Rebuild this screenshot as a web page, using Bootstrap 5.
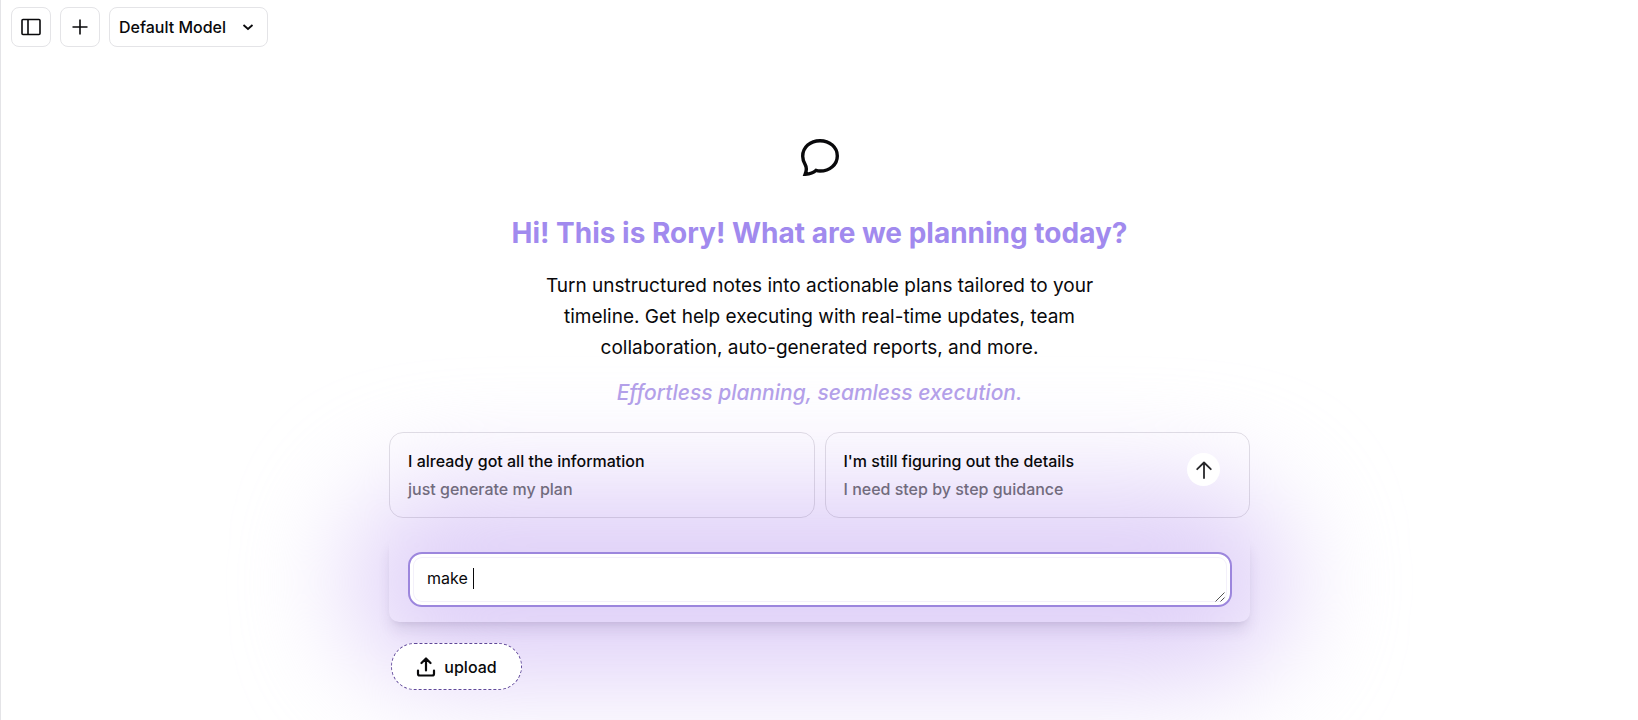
<!DOCTYPE html>
<html lang="en">
<head>
<meta charset="utf-8">
<meta name="viewport" content="width=device-width, initial-scale=1">
<title>Rory</title>
<link href="https://cdn.jsdelivr.net/npm/bootstrap@5.3.0/dist/css/bootstrap.min.css" rel="stylesheet">
<style>
  body { font-family: Inter, "Liberation Sans", sans-serif; color: #09090b; background: #fff; }
  .chat-shell { border-left: 1px solid #e4e4e7; overflow: hidden; }
  .toolbar { padding: 7px 10px 0; gap: 9px; }
  .tool-btn { height: 40px; border: 1px solid #e4e4e7; border-radius: 8px; background: #fff; color: #09090b; }
  .tool-square { width: 40px; }
  .model-btn { font-size: 16px; line-height: 24px; font-weight: 500; padding: 0 9px; gap: 12px; }
  .chat-main { width: 100%; max-width: 861px; padding-top: 92px; }
  .hero-title { font-size: 28px; line-height: 36px; font-weight: 700; color: #a18aee; margin-top: 38px; }
  .hero-copy { font-size: 19px; line-height: 31px; max-width: 576px; margin-top: 19px; }
  .hero-tag { font-size: 21px; line-height: 32px; font-weight: 500; font-style: italic; color: #b3a0e9; margin-top: 14px; }
  .suggest-row { --bs-gutter-x: 10px; margin-top: 23px; z-index: 2; }
  .suggest-btn { border: 1px solid rgba(60, 50, 80, .15); border-radius: 14px; background: transparent; padding: 14px 18px; font-size: 16px; line-height: 28px; font-weight: 500; height: 86px; color: #09090b; }
  .suggest-sub { color: #716b7d; }
  .send-btn { width: 33px; height: 33px; right: 30px; top: 21px; border: 0; background: #fff; color: #27272a; }
  .composer { margin-top: 18px; padding: 16px 18px 15px 19px; border-radius: 10px; box-shadow: 0 10px 15px -3px rgba(60, 40, 90, .12), 0 4px 6px -4px rgba(60, 40, 90, .12); }
  .composer::before { content: ""; position: absolute; z-index: -1; inset: -50px -40px -56px; border-radius: 95px; background: #dfd0f8; filter: blur(54px); }
  .prompt-box, .prompt-box:focus { height: 55px; border: 2px solid #9c86dd; border-radius: 14px; background: #fff; padding: 11px 17px; font-size: 16px; line-height: 26px; color: #09090b; box-shadow: inset 0 0 0 3px #fff, inset 0 0 0 4px #f3f0fa; resize: none; overflow: hidden; caret-color: transparent; }
  .text-caret { left: 84px; top: 32px; width: 1px; height: 21px; background: #09090b; }
  .resize-grip { right: 25px; bottom: 20px; }
  .upload-btn { margin: 21px 0 0 2px; width: 131px; height: 47px; border: 1px dashed #60489a; background: #fff; color: #09090b; font-size: 16px; line-height: 24px; font-weight: 500; }
</style>
</head>
<body>
<div class="chat-shell min-vh-100">
  <header class="toolbar d-flex">
    <button type="button" class="tool-btn tool-square d-flex align-items-center justify-content-center p-0" aria-label="Toggle sidebar">
      <svg width="20" height="20" viewBox="0 0 20 20" fill="none" stroke="currentColor" stroke-width="1.6" stroke-linejoin="round"><rect x="1" y="2.5" width="18" height="15" rx="1"/><path d="M7 2.5v15"/></svg>
    </button>
    <button type="button" class="tool-btn tool-square d-flex align-items-center justify-content-center p-0" aria-label="New chat">
      <svg width="18" height="18" viewBox="0 0 18 18" fill="none" stroke="currentColor" stroke-width="1.6"><path d="M9 1.5v15M1.5 9h15"/></svg>
    </button>
    <button type="button" class="tool-btn model-btn d-flex align-items-center">Default Model
      <svg width="20" height="20" viewBox="0 0 20 20" fill="none" stroke="currentColor" stroke-width="1.8"><path d="M5.500 8 10 12l4.500-4"/></svg>
    </button>
  </header>

  <main class="chat-main mx-auto">
    <section class="d-flex flex-column align-items-center text-center position-relative z-2">
      <svg width="38" height="38" viewBox="0 0 38 38" fill="none" stroke="currentColor" stroke-width="3.400"><path d="M4.200 35.200C5.600 31.600 5.900 28.500 4.200 25.600 2.500 22.800 1.700 20.200 1.700 17.300 1.700 8.200 9.300 1.700 19 1.700S36.300 8.200 36.300 16.900 28.700 32 19 32C17.500 32 16.200 31.800 15 31.400 12.800 33.700 8.900 35 4.200 35.200Z"/></svg>
      <h1 class="hero-title mb-0">Hi! This is Rory! What are we planning today?</h1>
      <p class="hero-copy mb-0">Turn unstructured notes into actionable plans tailored to your timeline. Get help executing with real-time updates, team collaboration, auto-generated reports, and more.</p>
      <p class="hero-tag mb-0">Effortless planning, seamless execution.</p>
    </section>

    <div class="suggest-row row position-relative">
      <div class="col-6">
        <button type="button" class="suggest-btn w-100 text-start"><span class="d-block">I already got all the information</span><span class="suggest-sub d-block">just generate my plan</span></button>
      </div>
      <div class="col-6">
        <div class="position-relative">
          <button type="button" class="suggest-btn w-100 text-start"><span class="d-block">I'm still figuring out the details</span><span class="suggest-sub d-block">I need step by step guidance</span></button>
          <button type="button" class="send-btn position-absolute rounded-circle d-flex align-items-center justify-content-center p-0" aria-label="Send">
            <svg width="18" height="18" viewBox="0 0 18 18" fill="none" stroke="currentColor" stroke-width="1.800" stroke-linecap="round" stroke-linejoin="round"><path d="M9 17V1.500M2.200 8.200 9 1.500l6.800 6.700"/></svg>
          </button>
        </div>
      </div>
    </div>

    <form class="position-relative z-1">
      <div class="composer position-relative">
        <textarea class="prompt-box form-control" rows="1" aria-label="Message">make </textarea>
        <span class="text-caret position-absolute"></span>
        <svg class="resize-grip position-absolute" width="10" height="10" viewBox="0 0 10 10" fill="none" stroke="#555" stroke-width="1"><path d="M.5 9.500l9-9M5.500 9.500l4-4"/></svg>
      </div>
      <button type="button" class="upload-btn rounded-pill d-flex align-items-center justify-content-center gap-2 p-0">
        <svg width="20" height="20" viewBox="0 0 20 20" fill="none" stroke="currentColor" stroke-width="2.200" stroke-linecap="round" stroke-linejoin="round"><path d="M10 13.500V2M5.500 6 10 1.500 14.500 6M2 13.500v3.200q0 1.800 1.800 1.800h12.400q1.800 0 1.800-1.800v-3.200"/></svg>
        upload
      </button>
    </form>
  </main>
</div>
<script src="https://cdn.jsdelivr.net/npm/bootstrap@5.3.0/dist/js/bootstrap.bundle.min.js"></script>
</body>
</html>
